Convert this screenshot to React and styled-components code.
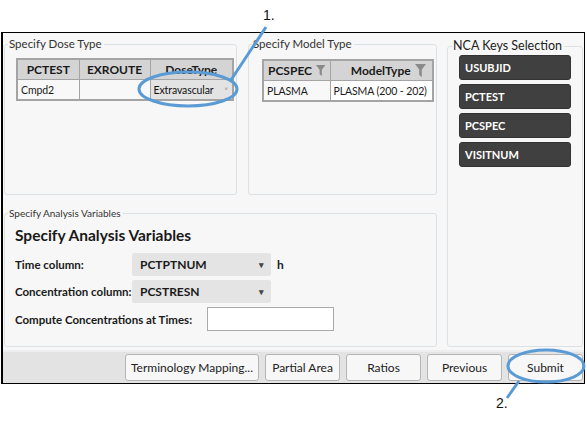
import React from "react";
import styled, { createGlobalStyle } from "styled-components";

const GlobalStyle = createGlobalStyle`
  html, body {
    margin: 0;
    padding: 0;
    background: #ffffff;
  }
  body {
    font-family: Lato, "Open Sans", sans-serif;
    color: #1a1a1a;
  }
`;

const Page = styled.div`
  position: relative;
  width: 587px;
  height: 425px;
  padding: 32px 0 0 1px;
  box-sizing: border-box;
`;

const Window = styled.div`
  width: 584px;
  height: 352px;
  box-sizing: border-box;
  border: 1px solid #000;
  border-left-width: 2px;
  background: #f7f7f7;
  display: flex;
  flex-direction: column;
`;

const Main = styled.div`
  flex: 1;
  display: grid;
  grid-template-columns: 233px 189px 135px;
  grid-template-rows: 158px 1fr;
  grid-template-areas:
    "dose model nca"
    "analysis analysis nca";
  column-gap: 11px;
  row-gap: 11px;
  padding: 4px 0 3px 1px;
`;

const Group = styled.fieldset`
  grid-area: ${(p) => p.$area};
  margin: 0;
  padding: 0;
  border: 1px solid #dbe2e5;
  border-radius: 3px;
  min-width: 0;
  ${(p) => p.$area === "nca" && "margin-left: -1px; margin-top: 2px;"}
`;

const Legend = styled.legend`
  margin-left: ${(p) => (p.$big ? "4px" : "3px")};
  padding: 0 2px 0 1px;
  font-size: ${(p) => (p.$big ? "12.5px" : p.$small ? "10px" : "11.5px")};
  color: ${(p) => (p.$big ? "#222" : "#333")};
  line-height: 14px;
`;

const Table = styled.table`
  border-collapse: collapse;
  table-layout: fixed;
  width: ${(p) => p.$w};
  margin: ${(p) => p.$margin};
  border: 2px solid #a4a4a4;
`;

const Col = styled.col`
  width: ${(p) => p.$w};
`;

const Th = styled.th`
  background: #d4d4d4;
  border: 1px solid #a4a4a4;
  height: 19px;
  padding: 0 4px;
  font-weight: 700;
  font-size: 12px;
  text-align: center;
  white-space: nowrap;
  overflow: hidden;
`;

const ThInner = styled.span`
  display: flex;
  align-items: center;
  justify-content: ${(p) => (p.$spread ? "space-between" : "center")};
  gap: 4px;
`;

const Td = styled.td`
  border: 1px solid #a4a4a4;
  height: 19px;
  padding: 0 2px 0 3px;
  background: ${(p) => p.$bg || "#f8f8f8"};
  white-space: nowrap;
  overflow: hidden;
  font-size: 10.5px;
  letter-spacing: -0.1px;
`;

const Combo = styled.div`
  display: flex;
  align-items: center;
  justify-content: space-between;
  color: #111;
`;

const Chevron = styled.span`
  color: #888;
  font-size: 8px;
  margin-right: 2px;
`;

const KeyList = styled.div`
  display: flex;
  flex-direction: column;
  gap: 4px;
  margin: 2px 11px 0 11px;
`;

const KeyButton = styled.div`
  height: 25px;
  box-sizing: border-box;
  background: #404040;
  border: 1px solid #333;
  border-radius: 3px;
  color: #fff;
  font-weight: 700;
  font-size: 11px;
  display: flex;
  align-items: center;
  padding-left: 5px;
`;

const AnalysisBody = styled.div`
  padding: 6px 10px 0 10px;
  display: flex;
  flex-direction: column;
`;

const Heading = styled.div`
  font-size: 15.5px;
  font-weight: 700;
  margin-bottom: 8px;
  color: #1a1a1a;
`;

const Row = styled.div`
  display: flex;
  align-items: center;
  height: 24px;
  margin-bottom: 3.5px;
`;

const Label = styled.div`
  width: ${(p) => p.$w || "117px"};
  font-size: 11.5px;
  font-weight: 700;
  white-space: nowrap;
`;

const Select = styled.div`
  width: 139px;
  height: 23px;
  box-sizing: border-box;
  background: #e4e4e4;
  border-radius: 2px;
  display: flex;
  align-items: center;
  justify-content: space-between;
  padding: 0 7px 0 8px;
  font-size: 12px;
  font-weight: 700;
`;

const Caret = styled.span`
  font-size: 9px;
  color: #444;
`;

const Unit = styled.span`
  margin-left: 6px;
  font-size: 12px;
  font-weight: 700;
`;

const Input = styled.div`
  width: 127px;
  height: 24px;
  box-sizing: border-box;
  background: #fff;
  border: 1px solid #a9a9a9;
`;

const BottomBar = styled.div`
  height: 33px;
  box-sizing: border-box;
  background: #e3e3e3;
  border-top: 2px solid #eeeeee;
  display: flex;
  justify-content: flex-end;
  align-items: center;
  gap: 6px;
  padding: 0 1px 0 0;
`;

const Button = styled.div`
  width: ${(p) => p.$w};
  height: 27px;
  box-sizing: border-box;
  background: #f7f7f7;
  border: 1px solid #b4b4b4;
  border-radius: 3px;
  display: flex;
  align-items: center;
  justify-content: center;
  font-size: 12px;
  color: #222;
`;

const Overlay = styled.svg`
  position: absolute;
  left: 0;
  top: 0;
  pointer-events: none;
`;

const Callout = styled.span`
  position: absolute;
  left: ${(p) => p.$x}px;
  top: ${(p) => p.$y}px;
  font-family: "Liberation Sans", sans-serif;
  font-size: 14px;
  color: #111;
`;

const Funnel = () => (
  <svg width="11" height="13" viewBox="0 0 11 13">
    <path d="M0 0 H11 L6.8 5.5 V13 L4.2 11 V5.5 Z" fill="#8a8a8a" />
  </svg>
);

export default function App() {
  return (
    <>
      <GlobalStyle />
      <Page>
        <Window>
          <Main>
            <Group $area="dose">
              <Legend>Specify Dose Type</Legend>
              <Table $w="216px" $margin="7px 0 0 11px">
                <colgroup>
                  <Col $w="62px" />
                  <Col $w="71px" />
                  <Col $w="83px" />
                </colgroup>
                <thead>
                  <tr>
                    <Th>PCTEST</Th>
                    <Th>EXROUTE</Th>
                    <Th>DoseType</Th>
                  </tr>
                </thead>
                <tbody>
                  <tr>
                    <Td>Cmpd2</Td>
                    <Td />
                    <Td $bg="#e3e3e3">
                      <Combo>
                        Extravascular <Chevron>˅</Chevron>
                      </Combo>
                    </Td>
                  </tr>
                </tbody>
              </Table>
            </Group>

            <Group $area="model">
              <Legend>Specify Model Type</Legend>
              <Table $w="170px" $margin="8px 0 0 13px">
                <colgroup>
                  <Col $w="67px" />
                  <Col $w="103px" />
                </colgroup>
                <thead>
                  <tr>
                    <Th>
                      <ThInner $spread>
                        PCSPEC <Funnel />
                      </ThInner>
                    </Th>
                    <Th>
                      <ThInner>
                        <span style={{ marginLeft: 14 }}>ModelType</span> <Funnel />
                      </ThInner>
                    </Th>
                  </tr>
                </thead>
                <tbody>
                  <tr>
                    <Td>PLASMA</Td>
                    <Td $bg="#ffffff">PLASMA (200 - 202)</Td>
                  </tr>
                </tbody>
              </Table>
            </Group>

            <Group $area="nca">
              <Legend $big>NCA Keys Selection</Legend>
              <KeyList>
                <KeyButton>USUBJID</KeyButton>
                <KeyButton>PCTEST</KeyButton>
                <KeyButton>PCSPEC</KeyButton>
                <KeyButton>VISITNUM</KeyButton>
              </KeyList>
            </Group>

            <Group $area="analysis">
              <Legend $small>Specify Analysis Variables</Legend>
              <AnalysisBody>
                <Heading>Specify Analysis Variables</Heading>
                <Row>
                  <Label>Time column:</Label>
                  <Select>
                    PCTPTNUM <Caret>▾</Caret>
                  </Select>
                  <Unit>h</Unit>
                </Row>
                <Row>
                  <Label>Concentration column:</Label>
                  <Select>
                    PCSTRESN <Caret>▾</Caret>
                  </Select>
                </Row>
                <Row>
                  <Label $w="192px">Compute Concentrations at Times:</Label>
                  <Input />
                </Row>
              </AnalysisBody>
            </Group>
          </Main>

          <BottomBar>
            <Button $w="134px">Terminology Mapping...</Button>
            <Button $w="75px">Partial Area</Button>
            <Button $w="75px">Ratios</Button>
            <Button $w="75px">Previous</Button>
            <Button $w="75px">Submit</Button>
          </BottomBar>
        </Window>

        <Overlay width="587" height="425" viewBox="0 0 587 425">
          <ellipse cx="188" cy="89" rx="49" ry="17" fill="none" stroke="#5b9bd5" strokeWidth="3" />
          <line x1="231" y1="80" x2="266" y2="27" stroke="#5b9bd5" strokeWidth="3" />
          <ellipse cx="546" cy="366" rx="38" ry="16" fill="none" stroke="#5b9bd5" strokeWidth="3" />
          <line x1="519" y1="381" x2="507" y2="398" stroke="#5b9bd5" strokeWidth="3" />
        </Overlay>
        <Callout $x={263} $y={7}>1.</Callout>
        <Callout $x={496} $y={395}>2.</Callout>
      </Page>
    </>
  );
}
